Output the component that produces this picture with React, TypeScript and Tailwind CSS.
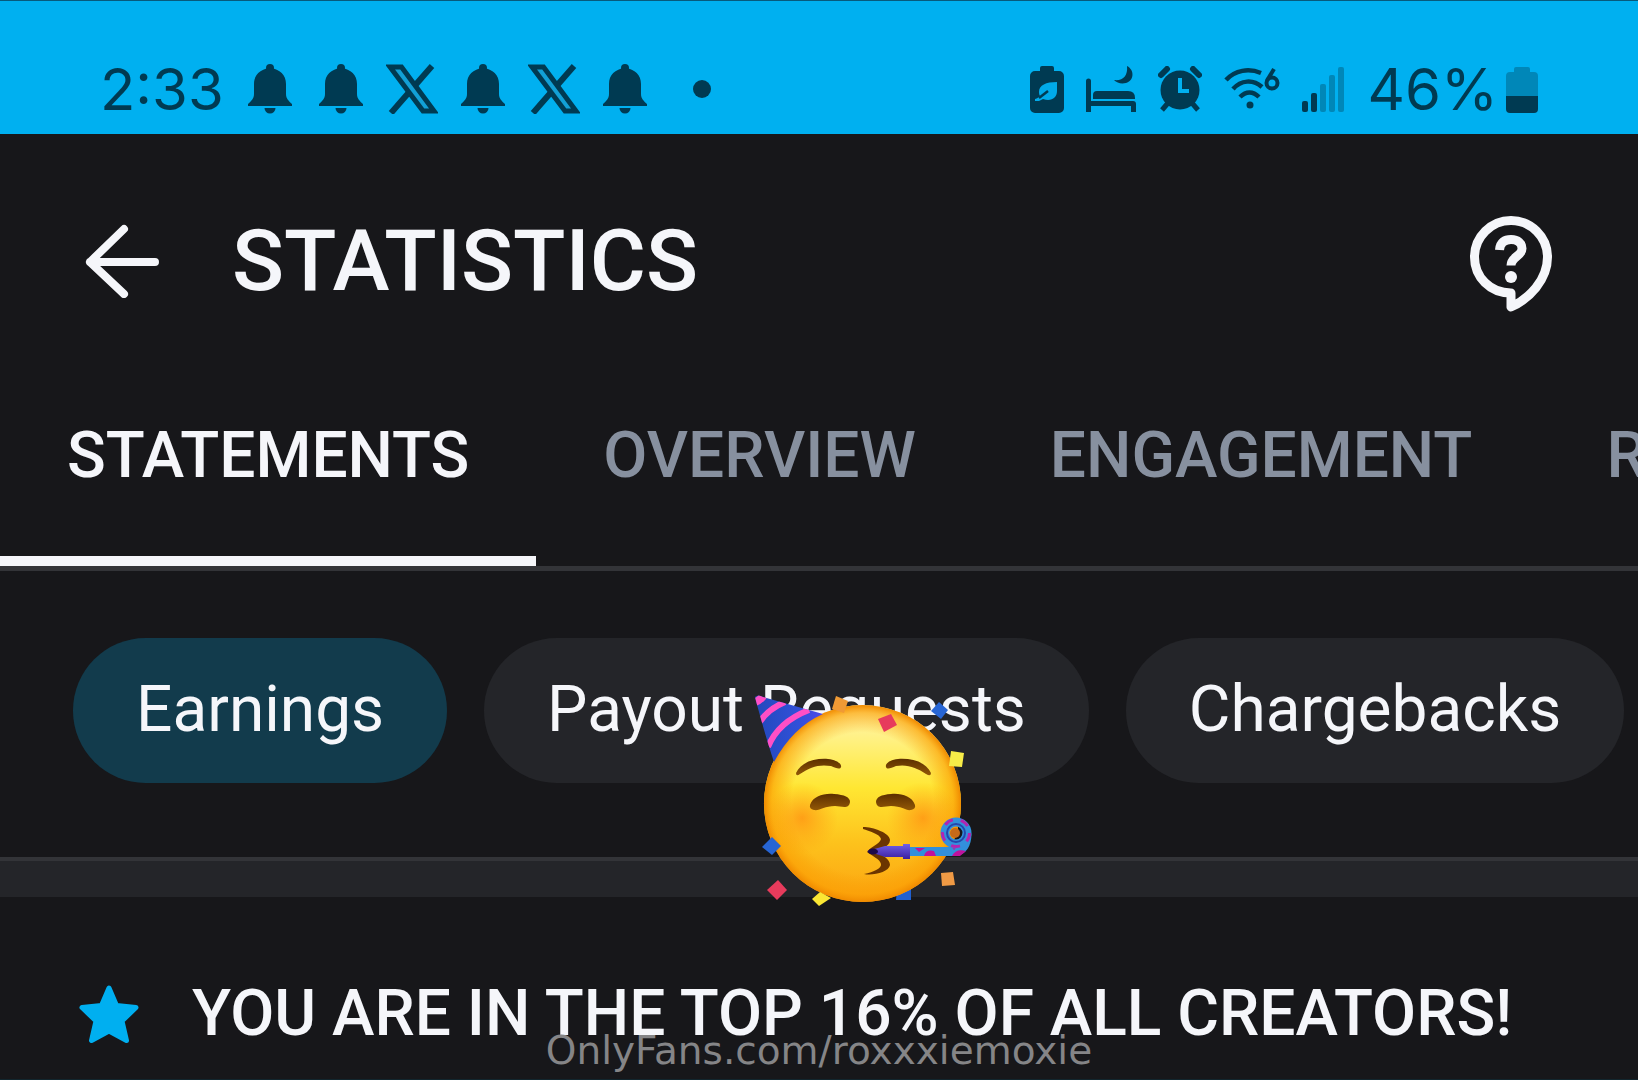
import React from "react";

const TABS = ["STATEMENTS", "OVERVIEW", "ENGAGEMENT", "REACH"];

const FILTERS = ["Earnings", "Payout Requests", "Chargebacks"];

const BellIcon = () => (
  <svg viewBox="0 0 44 50" className="h-[50px] w-11 shrink-0" fill="#003a52">
    <circle cx="22" cy="4" r="4" />
    <path d="M22 4C12 5 6 11 6 20v10c0 5-3 7-6 10v2h44v-2c-3-3-6-5-6-10V20C38 11 32 5 22 4Z" />
    <path d="M16.500 44h11a5.500 5.500 0 0 1-11 0Z" />
  </svg>
);

const XIcon = () => (
  <svg viewBox="0 0 52 50" className="-mx-1 h-[50px] w-[52px] shrink-0">
    <path d="M46 2 5 49" stroke="#003a52" strokeWidth="6" fill="none" />
    <path d="M4 3h11.500L48 47H37Z" fill="#12a0d6" stroke="#003a52" strokeWidth="5" />
  </svg>
);

const BatterySaverIcon = () => (
  <svg viewBox="0 0 34 48" className="h-12 w-[34px] shrink-0">
    <path d="M10 5V3a2 2 0 0 1 2-2h10a2 2 0 0 1 2 2v3h5a5 5 0 0 1 5 5v32a5 5 0 0 1-5 5H5a5 5 0 0 1-5-5V11a5 5 0 0 1 5-5h5Z" fill="#003a52" />
    <path d="M27 17C16 17 9 20 9 27c0 2 .5 3 1 4-2 2-4 3-5 3v2h4l4-2c8 3 14-1 14-8Z" fill="#00aaea" />
    <path d="M9 33 18 26" stroke="#003a52" strokeWidth="2.500" />
  </svg>
);

const BedIcon = () => (
  <svg viewBox="0 0 50 48" className="h-12 w-[50px] shrink-0" fill="#003a52">
    <path d="M0 16a2 2 0 0 1 5 0v20h42a3 3 0 0 1 3 3v8h-5v-6H5v6H0Z" />
    <path d="M7 34v-4a4 4 0 0 1 4-4h31q7 0 7 7v1Z" />
    <path d="M41 1c8 4 7 15-1 17-5 1-9 0-12-3 9 1 14-4 13-14Z" />
  </svg>
);

const AlarmIcon = () => (
  <svg viewBox="0 0 44 46" className="h-[46px] w-11 shrink-0" fill="none" stroke="#003a52">
    <circle cx="22" cy="24" r="19.500" fill="#003a52" stroke="none" />
    <path d="m3 9 6-6M41 9l-6-6" strokeWidth="6" strokeLinecap="round" />
    <path d="m10 37-6 7M34 37l6 7" strokeWidth="5" />
    <path d="M22 12v13h9" stroke="#00b0f0" strokeWidth="4" />
  </svg>
);

const WifiIcon = () => (
  <svg viewBox="0 0 56 44" className="h-11 w-14 shrink-0" fill="none" stroke="#003a52" strokeWidth="4.500">
    <path d="M2 13C11 3 25 1 37 6M9 22c8-9 20-10 29-2M16 30c6-6 13-6 19 0" />
    <circle cx="26" cy="38" r="3.500" fill="#003a52" stroke="none" />
    <circle cx="48" cy="16" r="5.500" strokeWidth="4" />
    <path d="M43 13.500 50 2" strokeWidth="4" />
  </svg>
);

const SignalIcon = () => (
  <svg viewBox="0 0 42 46" className="h-[46px] w-[42px] shrink-0">
    <g fill="#003a52">
      <rect x="0" y="35" width="6" height="11" rx="2" />
      <rect x="9" y="27" width="6" height="19" rx="2" />
    </g>
    <g fill="#0087b8">
      <rect x="18" y="18" width="6" height="28" rx="2" />
      <rect x="27" y="9" width="6" height="37" rx="2" />
      <rect x="36" y="1" width="6" height="45" rx="2" />
    </g>
  </svg>
);

const BatteryIcon = () => (
  <svg viewBox="0 0 32 47" className="h-[47px] w-8 shrink-0">
    <path d="M8 6V3a2 2 0 0 1 2-2h12a2 2 0 0 1 2 2v3h4a4 4 0 0 1 4 4v20H0V10a4 4 0 0 1 4-4Z" fill="#0087b8" />
    <path d="M0 30h32v13a4 4 0 0 1-4 4H4a4 4 0 0 1-4-4Z" fill="#003a52" />
  </svg>
);

const PartyFace = () => (
  <svg viewBox="0 0 250 240" className="h-60 w-[250px]">
    <defs>
      <linearGradient id="skin" x1="0" y1="0" x2="0" y2="1">
        <stop offset="0" stopColor="#fff6b8" />
        <stop offset="0.2" stopColor="#fff07a" />
        <stop offset="0.42" stopColor="#ffe733" />
        <stop offset="0.7" stopColor="#fdc21c" />
        <stop offset="1" stopColor="#fca311" />
      </linearGradient>
      <radialGradient id="rim">
        <stop offset="0.72" stopColor="#f89a00" stopOpacity="0" />
        <stop offset="0.92" stopColor="#fb9f04" stopOpacity="0.65" />
        <stop offset="1" stopColor="#f08a00" />
      </radialGradient>
      <radialGradient id="cheek">
        <stop offset="0" stopColor="#ff8a10" stopOpacity="0.7" />
        <stop offset="1" stopColor="#ff9a10" stopOpacity="0" />
      </radialGradient>
      <linearGradient id="brown" x1="0" y1="0" x2="0" y2="1">
        <stop offset="0" stopColor="#5c2f00" />
        <stop offset="1" stopColor="#925806" />
      </linearGradient>
      <linearGradient id="horn" x1="0" y1="0" x2="0" y2="1">
        <stop offset="0" stopColor="#7060e8" />
        <stop offset="1" stopColor="#3c1fa0" />
      </linearGradient>
      <linearGradient id="hat" x1="0" y1="0" x2="1" y2="0">
        <stop offset="0" stopColor="#2148b8" />
        <stop offset="0.6" stopColor="#3150d8" />
        <stop offset="1" stopColor="#5546ee" />
      </linearGradient>
      <clipPath id="hatShape">
        <path d="M15 17Q18 14 23 17L83 34Q53 47 34 82Q26 58 16 21Z" />
      </clipPath>
    </defs>
    <path d="m157 210 14-4v14h-15Z" fill="#2060d0" />
    <circle cx="122.500" cy="123.500" r="98.500" fill="url(#skin)" />
    <circle cx="122.500" cy="123.500" r="98.500" fill="url(#rim)" />
    <circle cx="62" cy="138" r="36" fill="url(#cheek)" />
    <circle cx="183" cy="138" r="36" fill="url(#cheek)" />

    {/* hat */}
    <g clipPath="url(#hatShape)">
      <rect x="10" y="10" width="80" height="80" fill="url(#hat)" />
      <path d="M12 23Q20 22 26 12" stroke="#ff4fc6" strokeWidth="8" fill="none" />
      <path d="M19 43Q28 29 45 22" stroke="#ff4fc6" strokeWidth="6" fill="none" />
      <path d="M28 67Q38 42 69 30" stroke="#ff4fc6" strokeWidth="6" fill="none" />
    </g>

    {/* brows and eyes */}
    <g fill="url(#brown)">
      <path d="M56 93C61 82 75 78 88 79C97 80 102 84 101 87C100 90 96 88 91 86C79 84 70 87 60 94Q56 97 56 93Z" />
      <path d="M191 93C186 82 172 78 158 79C149 80 145 84 146 87C147 90 151 88 156 86C168 84 177 88 186 94Q191 97 191 93Z" />
      <path d="M70 125C73 116 84 113 94 114Q110 115 110 122C109 130 101 126 95 126C84 126 80 131 74 130Q69 129 70 125Z" />
      <path d="M175 125C172 116 161 113 151 114Q136 115 136 122C137 130 145 126 151 126C162 126 166 131 171 130Q176 129 175 125Z" />
    </g>

    {/* mouth */}
    <path
      d="M123 147C133 147 150 153 150 160C150 167 139 170 133 171C142 174 150 179 150 185C149 192 133 196 124 194C134 192 142 188 141 184C140 179 132 176 127 172C130 167 140 164 141 159C140 154 129 151 123 149Z"
      fill="#6b3500"
    />

    {/* blower */}
    <path d="M170 171.500h44c9 0 13-8 13-18" stroke="#318fdb" strokeWidth="9" fill="none" />
    <path d="M175 168h10l-6 4Zm9 8q2-7 10-5l2 5Zm26-11 10-1-6 6Zm2 11q4-8 14-5l-6 5Z" fill="#c0129c" />
    <circle cx="216" cy="153" r="11" fill="none" stroke="#338fdc" strokeWidth="9" />
    <circle cx="216" cy="153" r="13.500" fill="none" stroke="#b324b0" strokeWidth="3" strokeDasharray="9 8" />
    <circle cx="216" cy="153" r="9" fill="none" stroke="#2447ad" strokeWidth="2" />
    <circle cx="215" cy="153" r="5" fill="#c76a18" />
    <path d="M127 171 145 166h18v-2h7v15h-7v-2h-18Z" fill="url(#horn)" />
    <ellipse cx="133" cy="171.500" rx="5" ry="3" fill="#1d0a48" />

    {/* confetti */}
    <path d="m96 16 12 5-4 12-12-4Z" fill="#f09a35" />
    <path d="m138 39 13-5 6 11-13 7Z" fill="#e73b5c" />
    <path d="m199 22 9 8-7 9-10-8Z" fill="#2765d4" />
    <path d="m211 71 13 2-2 14-13-1Z" fill="#f7ec48" />
    <path d="m32 157 9 9-9 9-10-8Z" fill="#2765d4" />
    <path d="m38 200 9 10-10 10-10-10Z" fill="#e73b5c" />
    <path d="m80 212 11 6-12 8-7-7Z" fill="#fbe734" />
    <path d="m201 193 12-1 2 13-13 1Z" fill="#f09a45" />
  </svg>
);

const StatusBar = () => {
  return (
    <div className="flex h-[134px] items-end justify-between border-t border-[#075a7c] bg-[#00b0f0] px-[100px] pb-[18px] text-[#003a52]">
      <div className="flex h-[54px] items-center">
        <span className="mr-6 font-[Inter] text-[58px] leading-none">2:33</span>
        <div className="flex items-center gap-[27px]">
          <BellIcon />
          <BellIcon />
          <XIcon />
          <BellIcon />
          <XIcon />
          <BellIcon />
        </div>
        <span className="ml-[46px] size-[18px] rounded-full bg-[#003a52]" />
      </div>
      <div className="flex h-[54px] items-center">
        <div className="flex items-center gap-[22px]">
          <BatterySaverIcon />
          <BedIcon />
          <AlarmIcon />
          <WifiIcon />
          <SignalIcon />
        </div>
        <span className="mr-2 ml-6 font-[Inter] text-[58px] leading-none">46%</span>
        <BatteryIcon />
      </div>
    </div>
  );
};

const App = () => {
  return (
    <main className="relative min-h-screen overflow-hidden border-b border-[#12262e] bg-[#17171a] font-[Roboto,sans-serif] text-[#f5f6fa]">
      <StatusBar />

      <header className="flex h-[254px] items-center justify-between pr-[86px] pl-[84px]">
        <div className="flex items-center gap-[72px]">
          <button type="button" aria-label="Back">
            <svg viewBox="0 0 76 74" className="h-[74px] w-[76px]" fill="none" stroke="#f5f6fa" strokeWidth="8" strokeLinecap="round" strokeLinejoin="round">
              <path d="M40 5 6 38l34 32M6 38h65" />
            </svg>
          </button>
          <h1 className="text-[86px] leading-none font-medium">STATISTICS</h1>
        </div>
        <button type="button" aria-label="Help">
          <svg viewBox="0 -6 82 102" className="h-[102px] w-[82px]" fill="none" stroke="#f5f6fa" strokeWidth="9" strokeLinejoin="round">
            <path d="M41 91V77C20 77 4.500 61 4.500 41S21 4.500 41 4.500 77.500 21 77.500 41C77.500 64 59 83 41 91Z" />
            <path d="M29.500 34C30 26 35 23.500 41 23.500c7 0 11 4 11 9 0 8-11 8-11 17" />
            <circle cx="41" cy="61" r="6" fill="#f5f6fa" stroke="none" />
          </svg>
        </button>
      </header>

      <nav className="flex h-[183px] overflow-hidden border-b-[5px] border-[#333438]">
        {TABS.map((tab, index) => (
          <button
            key={index}
            type="button"
            className={
              index === 0
                ? "shrink-0 border-b-10 border-[#f5f6fa] px-[67px] pb-8 text-[64px] font-medium"
                : "shrink-0 border-b-10 border-transparent px-[67px] pb-8 text-[64px] font-medium text-[#87909f]"
            }
          >
            {tab}
          </button>
        ))}
      </nav>

      <section className="flex gap-[37px] border-b-4 border-[#333438] px-[73px] pt-[67px] pb-[74px]">
        {FILTERS.map((filter, index) => (
          <button
            key={index}
            type="button"
            className={
              index === 0
                ? "h-[145px] shrink-0 rounded-full bg-[#123b4c] px-[63px] pb-0.5 text-[64px]"
                : "h-[145px] shrink-0 rounded-full bg-[#242529] px-[63px] pb-0.5 text-[64px]"
            }
          >
            {filter}
          </button>
        ))}
      </section>
      <div className="h-9 bg-[#242529]" />

      <section className="flex items-center gap-[52px] px-[78px] pt-[79px]">
        <svg viewBox="0 0 62 60" className="h-[60px] w-[62px] shrink-0" fill="#00aff0" stroke="#00aff0" strokeWidth="5" strokeLinejoin="round">
          <path d="m31 4 7.500 17.500L58 23.500 44 37l4.500 19.500L31 47 13.500 56.500 18 37 4 23.500l19.500-2Z" />
        </svg>
        <p className="text-[64px] leading-[75px] font-medium whitespace-nowrap">
          YOU ARE IN THE TOP 16% OF ALL CREATORS!
        </p>
      </section>

      <div className="absolute top-[680px] left-[740px]">
        <PartyFace />
      </div>
      <p className="absolute inset-x-0 bottom-1 text-center font-['DejaVu_Sans'] text-[39px] leading-[48px] text-[#858587]">
        OnlyFans.com/roxxxiemoxie
      </p>
    </main>
  );
};

export default App;
